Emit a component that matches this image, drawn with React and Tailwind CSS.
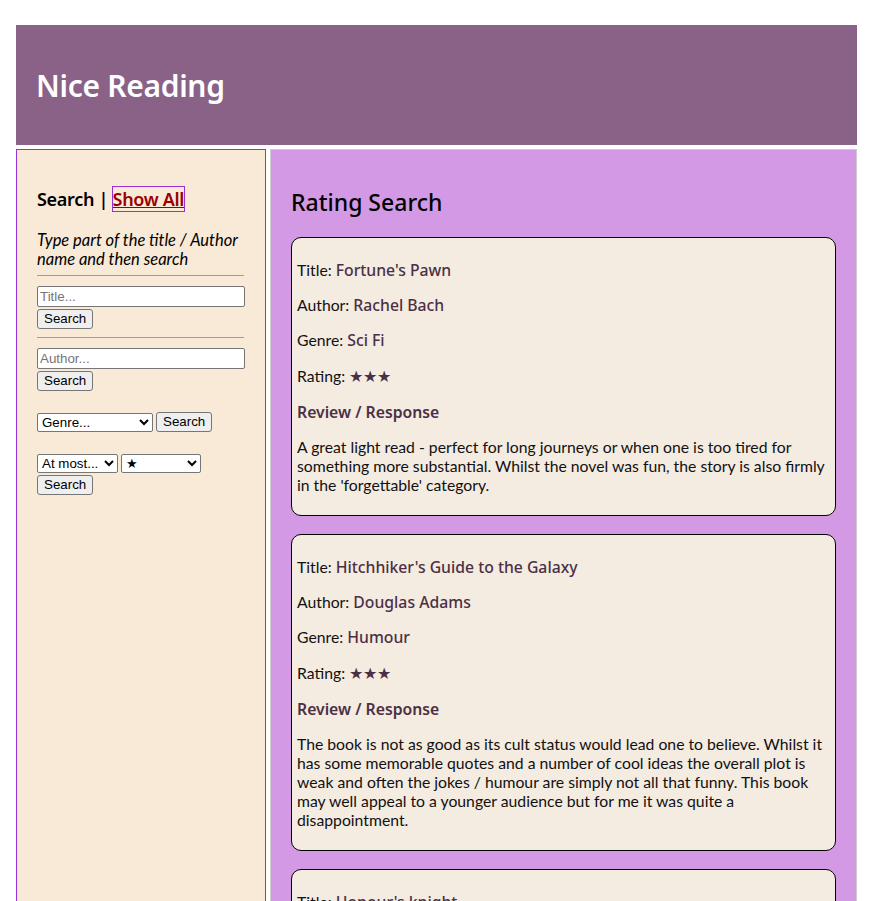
const books = [
  {
    title: "Fortune's Pawn",
    author: "Rachel Bach",
    genre: "Sci Fi",
    rating: "★★★",
    review:
      "A great light read - perfect for long journeys or when one is too tired for something more substantial. Whilst the novel was fun, the story is also firmly in the 'forgettable' category.",
  },
  {
    title: "Hitchhiker's Guide to the Galaxy",
    author: "Douglas Adams",
    genre: "Humour",
    rating: "★★★",
    review:
      "The book is not as good as its cult status would lead one to believe. Whilst it has some memorable quotes and a number of cool ideas the overall plot is weak and often the jokes / humour are simply not all that funny. This book may well appeal to a younger audience but for me it was quite a disappointment.",
  },
  {
    title: "Honour's knight",
    author: "Rachel Bach",
    genre: "Sci Fi",
    rating: "★★★",
    review: "",
  },
];

const head = { fontFamily: '"Noto Sans", "Open Sans", sans-serif' };
const ctl = { fontFamily: '"Liberation Sans", Arial, sans-serif' };

function Btn({ children }) {
  return (
    <button
      style={ctl}
      className="block h-[20px] px-[6px] text-[13.33px] leading-none text-black bg-[#efefef] border border-[#767676] rounded-[3px]"
    >
      {children}
    </button>
  );
}

function Field({ placeholder }) {
  return (
    <input
      style={ctl}
      placeholder={placeholder}
      className="block w-[208px] h-[21px] px-[2px] text-[13.33px] bg-white border border-[#767676] rounded-[2px] placeholder:text-[#757575]"
    />
  );
}

function Pick({ w, children }) {
  return (
    <select
      style={ctl}
      className={`${w} h-[19px] text-[13.33px] text-black bg-white border border-[#767676] rounded-[2px]`}
    >
      {children}
    </select>
  );
}

function Row({ label, value }) {
  return (
    <p className="my-4 h-[19px] leading-[19px]">
      {label}{" "}
      <span style={head} className="font-medium text-[#4b3045]">
        {value}
      </span>
    </p>
  );
}

function BookCard({ book }) {
  return (
    <div className="mb-[18px] bg-[#f4ebe1] border border-black rounded-[10px] px-[5px] py-[6px]">
      <Row label="Title:" value={book.title} />
      <Row label="Author:" value={book.author} />
      <Row label="Genre:" value={book.genre} />
      <p className="mt-[17px] h-[19px] leading-[19px]">
        Rating: <span className="text-[#4b3045]">{book.rating}</span>
      </p>
      <h4 style={head} className="mt-[18px] h-[19px] leading-[19px] font-semibold text-[#4b3045]">
        Review / Response
      </h4>
      <p className="mt-[15px] mb-[15px] leading-[19px]">{book.review}</p>
    </div>
  );
}

export default function App() {
  return (
    <div
      style={{ fontFamily: 'Lato, "Noto Sans", sans-serif' }}
      className="h-[901px] overflow-hidden bg-white pl-4 pr-[18px] pt-[25px] text-[#111]"
    >
      <header className="h-[120px] bg-[#8a6288] flex items-center px-5">
        <h1 style={head} className="text-[30px] font-semibold text-white tracking-[-0.3px]">
          Nice Reading
        </h1>
      </header>

      <div className="mt-1 flex gap-1 items-stretch">
        <aside className="w-[250px] shrink-0 h-[800px] bg-[#f9e9d7] border border-[#9b2fd6] px-5 pt-[37px]">
          <h3 style={head} className="text-[18px] leading-[24px] font-semibold text-black tracking-[-0.3px]">
            Search |{" "}
            <a href="#" className="text-[#990000] underline outline outline-1 outline-[#9b2fd6]">
              Show All
            </a>
          </h3>
          <p className="mt-[20px] text-[16.5px] leading-[19px] italic text-black">
            Type part of the title / Author name and then search
          </p>
          <hr className="mt-[6px] mb-[10px] w-[207px] border-t border-[#9e9e9e]" />
          <Field placeholder="Title..." />
          <div className="mt-[2px]">
            <Btn>Search</Btn>
          </div>
          <hr className="mt-[8px] mb-[10px] w-[207px] border-t border-[#9e9e9e]" />
          <Field placeholder="Author..." />
          <div className="mt-[2px]">
            <Btn>Search</Btn>
          </div>
          <div className="mt-[21px] flex items-center gap-[3px]">
            <Pick w="w-[116px]">
              <option>Genre...</option>
            </Pick>
            <Btn>Search</Btn>
          </div>
          <div className="mt-[22px] flex gap-[3px]">
            <Pick w="w-[81px]">
              <option>At most...</option>
            </Pick>
            <Pick w="w-[80px]">
              <option>★</option>
            </Pick>
          </div>
          <div className="mt-[2px]">
            <Btn>Search</Btn>
          </div>
        </aside>

        <main className="flex-1 bg-[#d399e4] border border-[#cccccc] px-5 pt-[38px] text-[15.75px]">
          <h2 style={head} className="text-[23px] leading-[28px] font-medium text-black mb-[21px]">
            Rating Search
          </h2>
          {books.map((b) => (
            <BookCard key={b.title} book={b} />
          ))}
        </main>
      </div>
    </div>
  );
}
